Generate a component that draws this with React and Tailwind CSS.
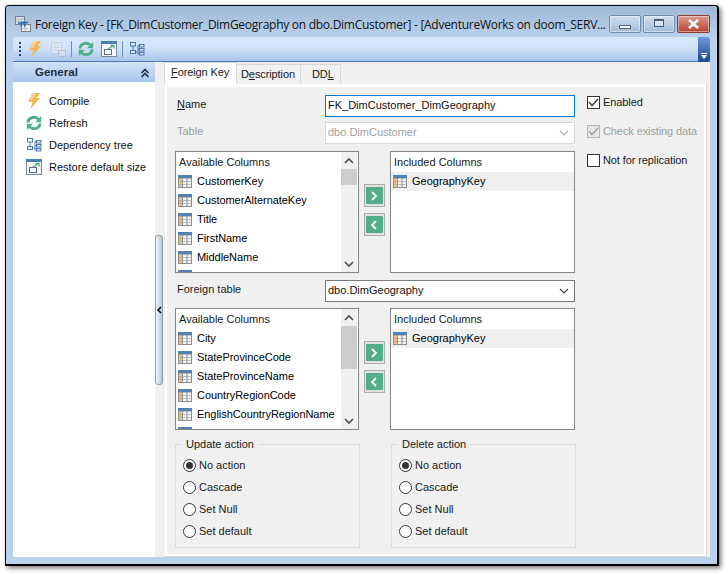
const F = "[font-family:'Liberation_Sans',sans-serif]";

function Bolt({ s = 16, dim }) {
  return (
    <svg width={s} height={s} viewBox="0 0 16 16" className={dim ? "opacity-60" : ""}>
      <path d="M6.500 0H14L10.500 5H14L4.500 16 6.500 9H2.500z" fill="#f2b655" />
      <path d="M6.500 0H10L6.500 6.500 3.500 7z" fill="#f8d596" />
    </svg>
  );
}
function Refresh({ s = 16 }) {
  return (
    <svg width={s} height={s} viewBox="0 0 16 16" fill="none">
      <path d="M1.800 7.500A6.200 5.800 0 0 1 12.300 4" stroke="#4fae8a" strokeWidth="2.800" />
      <path d="M15.200 1v6.200H9z" fill="#4fae8a" />
      <path d="M14.200 8.500A6.200 5.800 0 0 1 3.700 12" stroke="#4fae8a" strokeWidth="2.800" />
      <path d="M0.800 15V8.800H7z" fill="#4fae8a" />
    </svg>
  );
}
function Restore({ s = 16 }) {
  return (
    <svg width={s} height={s} viewBox="0 0 16 16" fill="none">
      <rect x="0.500" y="0.500" width="15" height="15" fill="#f4f6f8" stroke="#7b8794" />
      <rect x="0" y="0" width="16" height="3" fill="#4a7db8" />
      <rect x="3.500" y="8.500" width="7" height="5" stroke="#5f6b78" />
      <path d="M7 8l5-3M9.500 4.500h3.500v3" stroke="#4fae8a" strokeWidth="1.300" />
    </svg>
  );
}
function Tree({ s = 16 }) {
  return (
    <svg width={s} height={s} viewBox="0 0 16 16" fill="none" stroke="#3f6ea8" strokeWidth="0.900">
      <rect x="1.500" y="1.500" width="5" height="3.500" />
      <rect x="1.500" y="9.500" width="5" height="3" fill="#dbe7f5" />
      <rect x="10.500" y="3.500" width="4.500" height="2.500" fill="#dbe7f5" />
      <rect x="10.500" y="7.500" width="4.500" height="2.500" fill="#dbe7f5" />
      <rect x="10.500" y="11.500" width="4.500" height="2.500" fill="#dbe7f5" />
      <path d="M4 5v4.500M6.500 11h2.500M9 4.500v8.500M9 4.500h1.500M9 8.500h1.500M9 13h1.500" />
    </svg>
  );
}
function Save() {
  return (
    <svg width="16" height="16" viewBox="0 0 16 16" fill="none" className="opacity-60">
      <rect x="1.500" y="1.500" width="10" height="11" fill="#e8edf3" stroke="#b9c3cd" />
      <path d="M3.500 4h6M3.500 6.500h6M3.500 9h4" stroke="#c3ccd5" />
      <rect x="8.500" y="9.500" width="7" height="6" fill="#dfe4ea" stroke="#a9b3bd" />
    </svg>
  );
}
function TableIcon() {
  return (
    <svg width="14" height="13" viewBox="0 0 14 13" className="shrink-0">
      <rect width="14" height="13" fill="#8a8f96" />
      <rect width="14" height="3" fill="#5480b4" />
      {[3.5, 6.5, 9.5].map((y) => (
        <g key={y}>
          <rect x="1" y={y} width="3" height="2.500" fill="#f2c37e" />
          <rect x="5" y={y} width="3.500" height="2.500" fill="#f4f4f4" />
          <rect x="9.500" y={y} width="3.500" height="2.500" fill="#f4f4f4" />
        </g>
      ))}
    </svg>
  );
}
function Chevron({ dir, cls = "" }) {
  const d = { up: "M1 6l4-4 4 4", down: "M1 2l4 4 4-4" }[dir];
  return (
    <svg width="10" height="8" viewBox="0 0 10 8" fill="none" stroke="#505050" strokeWidth="1.700" className={cls}>
      <path d={d} />
    </svg>
  );
}
function ListBox({ rows, thumbH, thumbTop }) {
  return (
    <div className="w-[184px] h-[122px] bg-white border border-[#828790] flex overflow-hidden">
      <div className="flex-1 min-w-0 pl-[2px] pt-[4px] overflow-hidden">
        <div className="pl-[1px] h-[16px] leading-[13px] text-[#1a1a1a]">Available Columns</div>
        {rows.map((r) => (
          <div key={r} className="h-[19px] flex items-center gap-[5px] text-black whitespace-nowrap">
            <TableIcon />
            <span className="tracking-[-0.05px]">{r}</span>
          </div>
        ))}
        <div className="h-[19px] flex items-center"><TableIcon /></div>
      </div>
      <div className="w-[16px] mr-[1px] bg-[#f0f0f0] flex flex-col items-center">
        <div className="h-[17px] flex items-center justify-center"><Chevron dir="up" /></div>
        <div className="w-full bg-[#cdcdcd]" style={{ height: thumbH, marginTop: thumbTop }} />
        <div className="flex-1" />
        <div className="h-[17px] flex items-center justify-center"><Chevron dir="down" /></div>
      </div>
    </div>
  );
}
function Included() {
  return (
    <div className="w-[185px] h-[122px] bg-white border border-[#828790] pt-[4px]">
      <div className="pl-[3px] h-[16px] leading-[13px] text-[#1a1a1a]">Included Columns</div>
      <div className="h-[19px] pl-[2px] flex items-center gap-[5px] bg-[#f0f0f0] text-black">
        <TableIcon />
        <span>GeographyKey</span>
      </div>
    </div>
  );
}
function Arrow({ dir }) {
  return (
    <div className="w-[21px] h-[23px] bg-[#e1e1e1] border border-[#adadad] flex items-center justify-center">
      <div className="w-[17px] h-[17px] rounded-[1px] bg-[#52ad8b] flex items-center justify-center">
        <svg width="8" height="10" viewBox="0 0 8 10" fill="none" stroke="#fff" strokeWidth="1.800">
          <path d={dir === "r" ? "M2 1l4 4-4 4" : "M6 1L2 5l4 4"} />
        </svg>
      </div>
    </div>
  );
}
function Arrows() {
  return (
    <div className="w-[31px] flex flex-col items-center gap-[6px] pt-[33px] pr-[1px]">
      <Arrow dir="r" />
      <Arrow dir="l" />
    </div>
  );
}
function Group({ title, cls }) {
  const opts = ["No action", "Cascade", "Set Null", "Set default"];
  return (
    <div className={"w-[185px] h-[104px] border border-[#dcdcdc] relative pl-[7px] pt-[9px] " + cls}>
      <div className="absolute -top-[7px] left-[6px] px-[4px] bg-[#f0f0f0] leading-[13px] text-[#1a1a1a]">{title}</div>
      {opts.map((o, i) => (
        <div key={o} className="h-[22px] flex items-center gap-[3px] text-[#1a1a1a]">
          <div className="w-[13px] h-[13px] rounded-full border border-[#333] bg-white flex items-center justify-center">
            {i === 0 && <div className="w-[7px] h-[7px] rounded-full bg-[#333]" />}
          </div>
          <span>{o}</span>
        </div>
      ))}
    </div>
  );
}
function Check({ label, checked, disabled }) {
  return (
    <div className={"h-[29px] flex items-center gap-[3px] " + (disabled ? "text-[#9f9f9f]" : "text-[#1a1a1a]")}>
      <div className={"w-[13px] h-[13px] border flex items-center justify-center " + (disabled ? "border-[#b5b5b5] bg-[#e6e6e6]" : "border-[#333] bg-white")}>
        {checked && (
          <svg width="11" height="9" viewBox="0 0 11 9" fill="none" stroke={disabled ? "#a0a0a0" : "#444"} strokeWidth="1.500">
            <path d="M1 4l3 3.500L10 1" />
          </svg>
        )}
      </div>
      <span className="tracking-[-0.1px]">{label}</span>
    </div>
  );
}
function Caret({ color }) {
  return (
    <svg width="10" height="6" viewBox="0 0 10 6" fill="none" stroke={color} strokeWidth="1.200">
      <path d="M1 1l4 4 4-4" />
    </svg>
  );
}
function WinBtn({ cls, children }) {
  return (
    <div className={"h-[18px] rounded-[2px] border flex items-center justify-center shadow-[inset_0_0_0_1px_rgba(255,255,255,0.45)] " + cls}>{children}</div>
  );
}

const cols1 = ["CustomerKey", "CustomerAlternateKey", "Title", "FirstName", "MiddleName"];
const cols2 = ["City", "StateProvinceCode", "StateProvinceName", "CountryRegionCode", "EnglishCountryRegionName"];

export default function App() {
  return (
    <div className={"w-[728px] h-[574px] bg-white pl-[5px] pt-[5px] text-[11px] overflow-hidden " + F}>
      <div className="w-[714px] h-[561px] rounded-t-[4px] border border-black border-r-2 border-b-2 bg-[#b9d1ea] shadow-[2px_2px_5px_rgba(0,0,0,0.55)] flex flex-col">
        {/* title */}
        <div className="h-[31px] shrink-0 rounded-t-[3px] bg-gradient-to-b from-[#a0b8d5] to-[#b9d1ea] flex items-start pl-[9px] pr-[7px] pt-[9px]">
          <svg width="16" height="16" viewBox="0 0 16 16" fill="none" className="mt-[1px] shrink-0">
            <rect x="0.500" y="0.500" width="9" height="8" fill="#dfe3e8" stroke="#7a8088" />
            <path d="M1 3h8M1 5.500h8M3.500 3v5M6.500 3v5" stroke="#a9aeb5" strokeWidth="0.700" />
            <rect x="6.500" y="8.500" width="9" height="7" fill="#eceff3" stroke="#7a8088" />
            <path d="M7 12.500h6M10 9v6" stroke="#a9aeb5" strokeWidth="0.700" />
            <path d="M3 7h6a2 2 0 0 1 0 3.500M13 6.500H7a2 2 0 0 0 0 3.500" stroke="#2b6cb5" strokeWidth="1.500" />
          </svg>
          <div className="ml-[4px] mt-[2px] text-[12px] leading-[16px] text-[#111] whitespace-nowrap flex-1 min-w-0 font-['Open_Sans',sans-serif] tracking-[-0.27px]">
            Foreign Key - [FK_DimCustomer_DimGeography on dbo.DimCustomer] - [AdventureWorks on doom_SERV...
          </div>
          <div className="flex gap-[2px] ml-[2px] shrink-0">
            <WinBtn cls="w-[32px] border-[#6f8aaa] bg-gradient-to-b from-[#d2e0ef] to-[#a3bdd9]">
              <div className="w-[12px] h-[4px] mt-[5px] bg-white border border-[#55677d]" />
            </WinBtn>
            <WinBtn cls="w-[32px] border-[#6f8aaa] bg-gradient-to-b from-[#d2e0ef] to-[#a3bdd9]">
              <div className="w-[10px] h-[8px] mb-[2px] bg-white/40 border border-[#4d5e74] border-t-2" />
            </WinBtn>
            <WinBtn cls="w-[33px] border-[#8c3a34] bg-gradient-to-b from-[#d99a8f] to-[#b8402f]">
              <svg width="13" height="10" viewBox="0 0 13 10" stroke="#fff" strokeWidth="2.600" fill="none">
                <path d="M2 1l9 8M11 1l-9 8" />
              </svg>
            </WinBtn>
          </div>
        </div>
        {/* body */}
        <div className="flex-1 min-h-0 mx-[7px] flex flex-col">
          {/* toolbar */}
          <div className="h-[25px] shrink-0 rounded-tl-[3px] rounded-tr-[3px] bg-gradient-to-b from-[#d9e8fc] via-[#cfe1f9] to-[#a9c5ec] border-b border-[#4f78b3] flex items-center pl-[6px]">
            <div className="flex flex-col gap-[2px] mr-[6px]">
              {[0, 1, 2, 3].map((i) => (<div key={i} className="w-[2px] h-[2px] bg-[#27437a]" />))}
            </div>
            <Bolt />
            <div className="ml-[7px]"><Save /></div>
            <div className="w-px h-[16px] bg-[#6f8fb8] mx-[5px]" />
            <div className="ml-[1px]"><Refresh /></div>
            <div className="ml-[7px]"><Restore /></div>
            <div className="w-px h-[16px] bg-[#6f8fb8] mx-[5px]" />
            <div className="ml-[1px]"><Tree /></div>
            <div className="flex-1" />
            <div className="w-[12px] h-[25px] -mb-px rounded-r-[3px] bg-gradient-to-b from-[#6d9ad8] to-[#1d4a8f] flex flex-col items-center justify-end pb-[3px] gap-px">
              <div className="w-[6px] h-px bg-white" />
              <div className="w-0 h-0 border-x-[3px] border-x-transparent border-t-[4px] border-t-white" />
            </div>
          </div>
          <div className="flex-1 min-h-0 flex mb-[7px] bg-[#f0f0f0]">
            {/* sidebar */}
            <div className="w-[142px] shrink-0 bg-white">
              <div className="h-[20px] bg-gradient-to-b from-[#d3e3f8] to-[#a8c5ee] flex items-center pl-[22px] pr-[5px] justify-between pt-[2px]">
                <span className="font-bold text-[#1f2d44] text-[11.500px]">General</span>
                <svg width="10" height="10" viewBox="0 0 10 10" fill="none" stroke="#1f2d44" strokeWidth="1.600">
                  <path d="M1.500 5L5 1.500 8.500 5M1.500 9L5 5.500 8.500 9" />
                </svg>
              </div>
              <div className="pt-[8px] pl-[13px] text-[#111]">
                <div className="h-[22px] flex items-center gap-[7px]"><Bolt /><span>Compile</span></div>
                <div className="h-[22px] flex items-center gap-[7px]"><Refresh /><span>Refresh</span></div>
                <div className="h-[22px] flex items-center gap-[7px]"><Tree /><span>Dependency tree</span></div>
                <div className="h-[22px] flex items-center gap-[7px]"><Restore /><span>Restore default size</span></div>
              </div>
            </div>
            {/* splitter */}
            <div className="w-[10px] shrink-0 bg-[#f0f0f0] pt-[173px]">
              <div className="w-[8px] h-[150px] rounded-[3px] border border-[#9a9a9a] bg-gradient-to-r from-[#f4f6f8] to-[#a9c9e0] relative">
                <svg width="6" height="8" viewBox="0 0 6 8" fill="none" stroke="#000" strokeWidth="1.500" className="absolute left-[0px] top-[70px]">
                  <path d="M5 1L2 4l3 3" />
                </svg>
              </div>
            </div>
            {/* tabs + panel */}
            <div className="flex-1 min-w-0 flex flex-col bg-[#f0f0f0] pr-[3px]">
              <div className="h-[22px] shrink-0 flex items-end text-[#1a1a1a] -ml-[1px] tracking-[-0.1px]">
                <div className="w-[73px] h-[22px] bg-white border border-b-0 border-[#d9d9d9] pt-[3px] pl-[6px] leading-[13px]"><u>F</u>oreign Key</div>
                <div className="w-[64px] h-[20px] bg-[#f0f0f0] border-t border-r border-[#d9d9d9] pt-[3px] pl-[4px] leading-[13px]">D<u>e</u>scription</div>
                <div className="w-[40px] h-[20px] bg-[#f0f0f0] border-t border-r border-[#d9d9d9] pt-[3px] pl-[11px] leading-[13px]">DD<u>L</u></div>
              </div>
              <div className="flex-1 min-h-0 bg-white border-r border-b border-[#d9d9d9] p-[2px] pt-[3px]">
                <div className="h-full bg-[#f0f0f0] flex pl-[8px] pt-[8px]">
                  {/* left column */}
                  <div className="w-[401px] shrink-0 text-[#1a1a1a]">
                    <div className="h-[22px] flex items-center pl-[2px] pr-[1px]">
                      <span className="w-[148px] -mt-[3px]"><u>N</u>ame</span>
                      <div className="w-[250px] h-[22px] bg-white border border-[#0078d7] pl-[2px] leading-[18px] text-[#111]">FK_DimCustomer_DimGeography</div>
                    </div>
                    <div className="h-[22px] mt-[5px] flex items-center pl-[2px] pr-[1px] text-[#a0a0a0]">
                      <span className="w-[148px] -mt-[3px]">Table</span>
                      <div className="w-[250px] h-[22px] bg-white border border-[#d9d9d9] pl-[2px] pr-[5px] flex items-center justify-between">
                        <span className="-mt-[2px]">dbo.DimCustomer</span>
                        <Caret color="#b0b0b0" />
                      </div>
                    </div>
                    <div className="flex mt-[7px]">
                      <ListBox rows={cols1} thumbH={16} thumbTop={0} />
                      <Arrows />
                      <Included />
                    </div>
                    <div className="h-[22px] mt-[7px] flex items-center pl-[2px] pr-[1px]">
                      <span className="w-[148px] -mt-[3px]">Foreign table</span>
                      <div className="w-[250px] h-[22px] bg-white border border-[#7a7a7a] pl-[2px] pr-[5px] flex items-center justify-between text-[#111]">
                        <span className="-mt-[2px]">dbo.DimGeography</span>
                        <Caret color="#444" />
                      </div>
                    </div>
                    <div className="flex mt-[6px]">
                      <ListBox rows={cols2} thumbH={43} thumbTop={0} />
                      <Arrows />
                      <Included />
                    </div>
                    <div className="flex mt-[14px]">
                      <Group title="Update action" cls="" />
                      <Group title="Delete action" cls="ml-[31px]" />
                    </div>
                  </div>
                  {/* right column */}
                  <div className="ml-[11px] -mt-[7px]">
                    <Check label="Enabled" checked />
                    <Check label="Check existing data" checked disabled />
                    <Check label="Not for replication" />
                  </div>
                </div>
              </div>
            </div>
          </div>
        </div>
      </div>
    </div>
  );
}
